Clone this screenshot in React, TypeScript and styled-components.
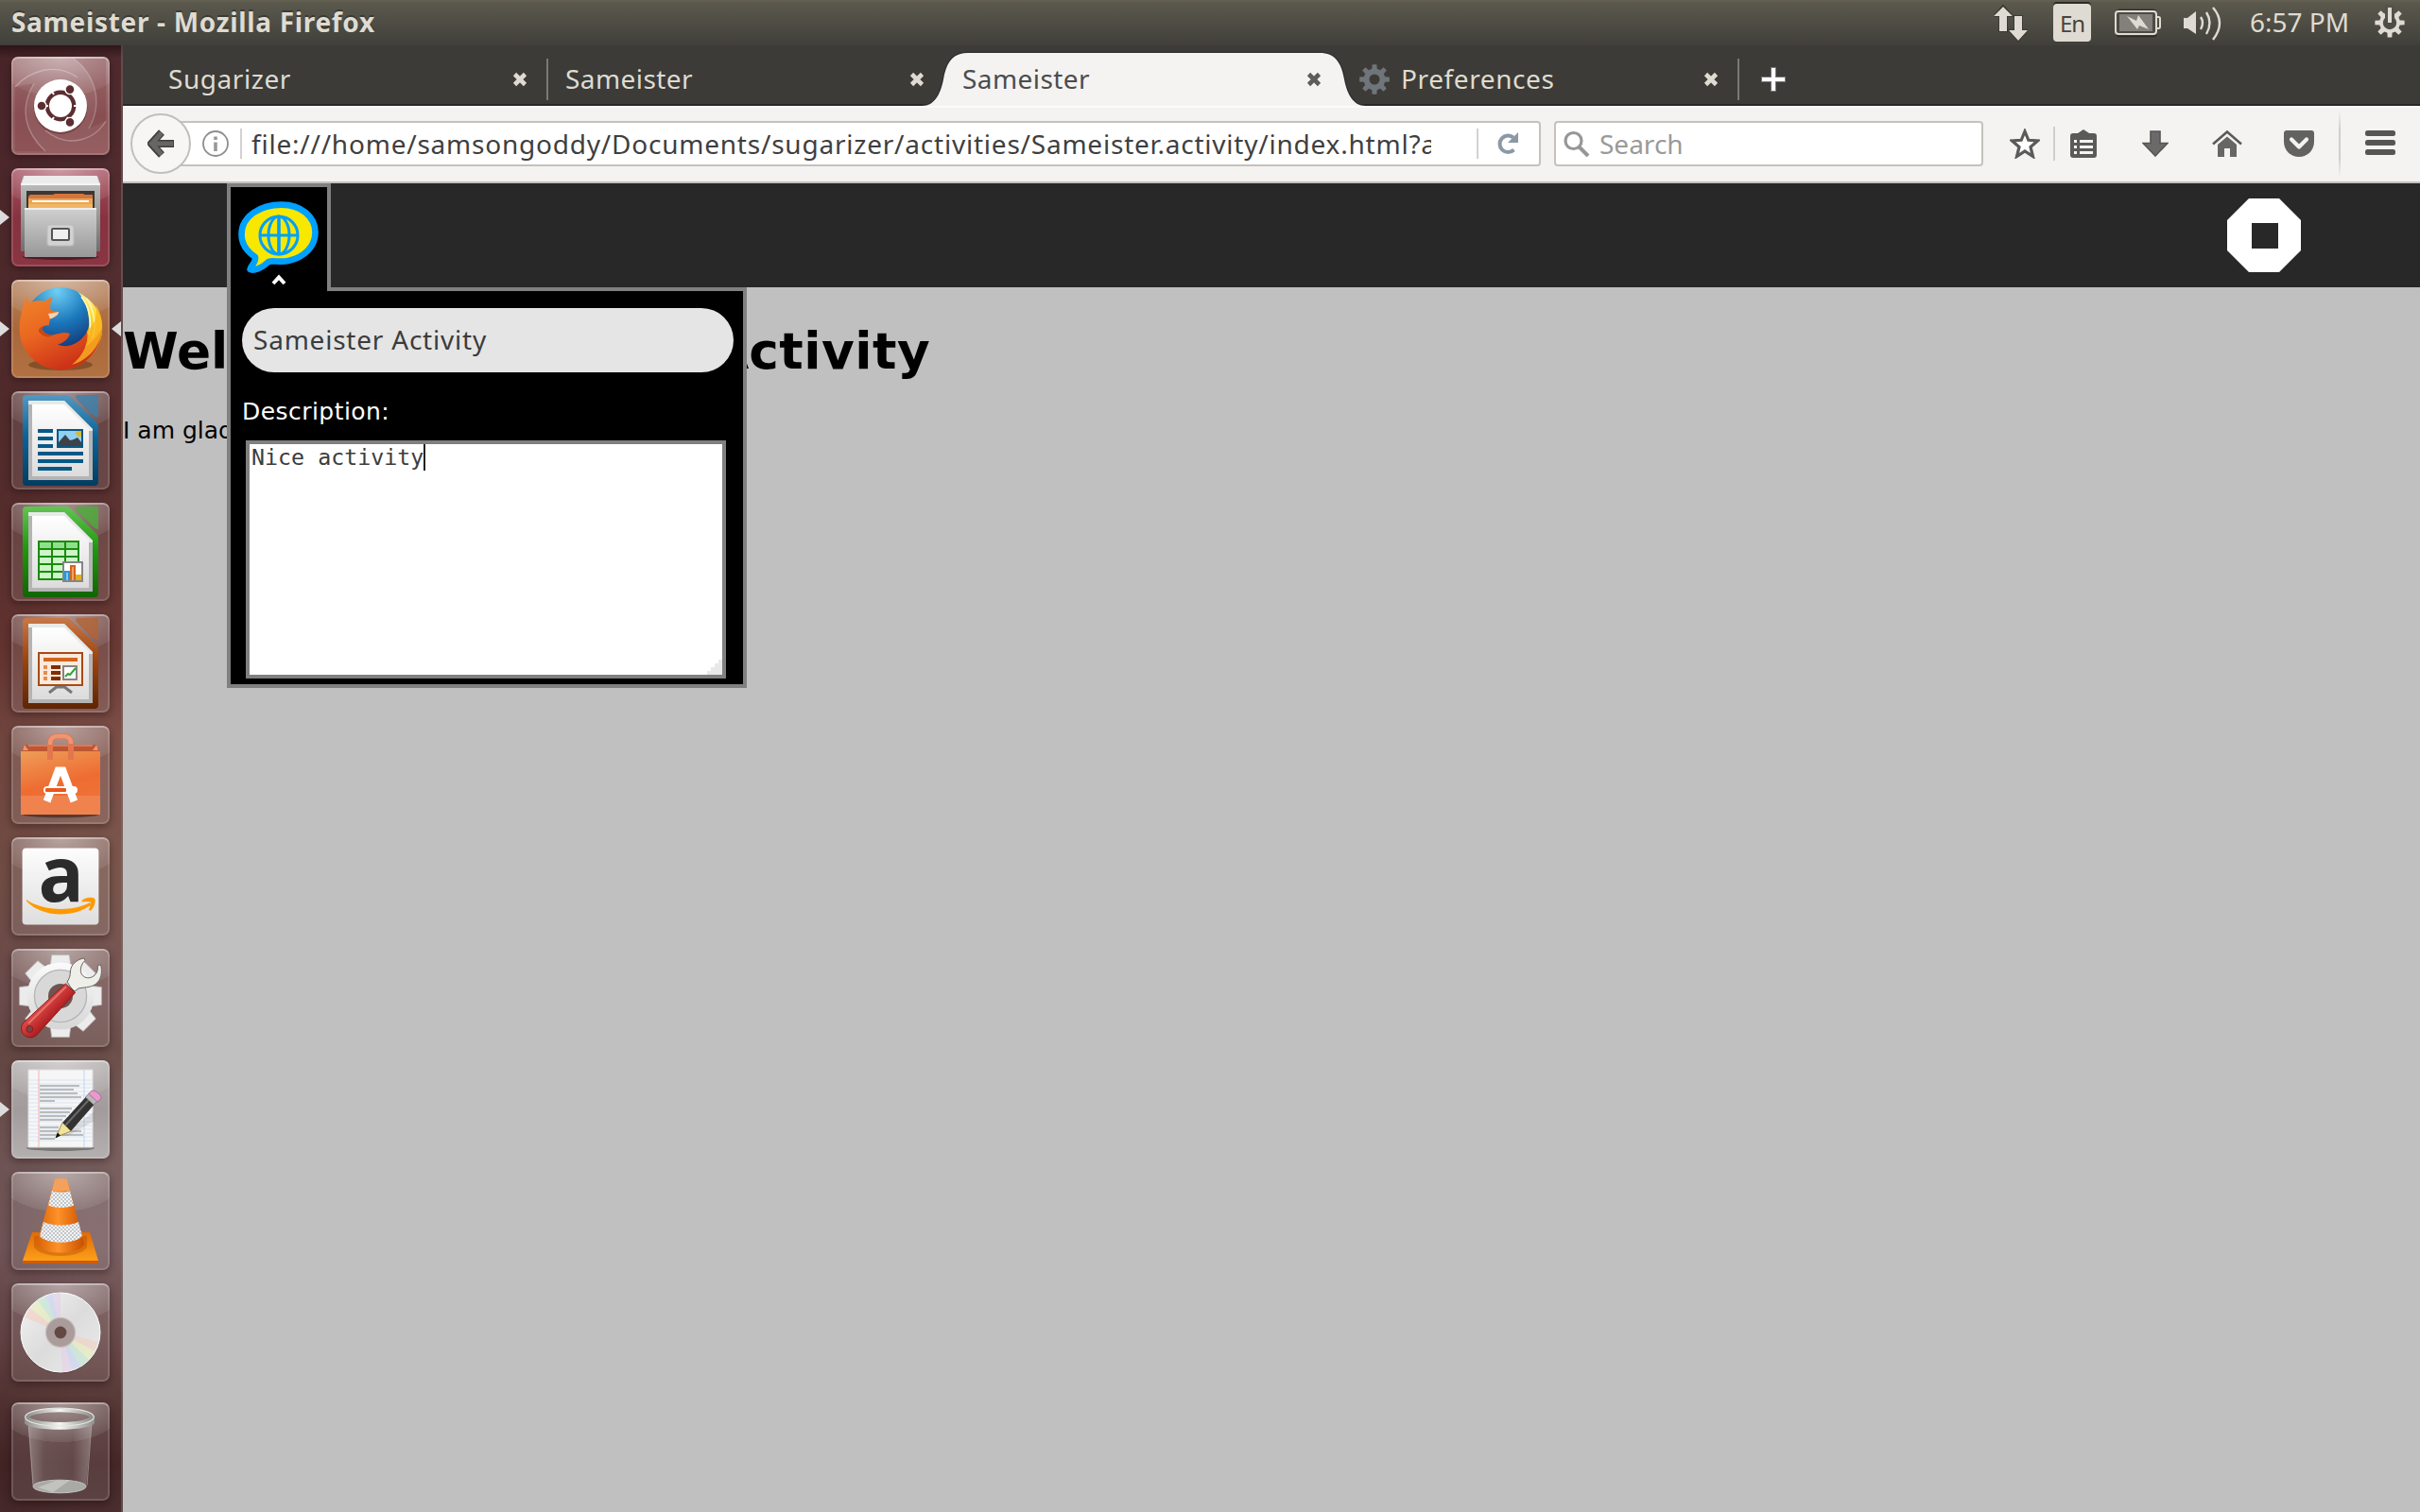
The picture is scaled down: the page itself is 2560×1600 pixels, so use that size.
import React from 'react';
import styled, { createGlobalStyle, css } from 'styled-components';

const UI_FONT = '"Noto Sans", "Open Sans", sans-serif';
const PAGE_FONT = '"DejaVu Sans", sans-serif';

const GlobalStyle = createGlobalStyle`
  html, body { margin: 0; padding: 0; }
  body { width: 2560px; height: 1600px; overflow: hidden; font-family: ${UI_FONT}; }
  * { box-sizing: border-box; }
  svg { display: block; flex: none; }
`;

const Desktop = styled.div`
  display: grid;
  grid-template: 48px 1552px / 130px 2430px;
`;

/* ---------- top panel ---------- */

const Panel = styled.header`
  grid-column: 1 / -1;
  display: flex;
  align-items: center;
  padding: 0 16px 0 12px;
  background: linear-gradient(#656253 0, #5b594d 3px, #403f3a 100%);
  color: #dfdbd2;
`;
const PanelTitle = styled.span`
  flex: 1;
  font-size: 28px;
  font-weight: 700;
  letter-spacing: 0.68px;
  line-height: 46px;
  padding-bottom: 2px;
  text-shadow: 0 -2px 0 rgba(0, 0, 0, 0.3);
`;
const Indicators = styled.div`
  display: flex;
  align-items: center;
  height: 48px;
`;
const Keyboard = styled.span`
  display: flex;
  justify-content: center;
  width: 40px;
  height: 40px;
  margin: 0 25px 0 27px;
  border-radius: 4px;
  background: #dfdbd2;
  box-shadow: 0 -2px 0 #2c2b27;
  color: #45443f;
  font-size: 24px;
  line-height: 42px;
  letter-spacing: -1px;
`;
const Clock = styled.span`
  font-size: 28px;
  line-height: 46px;
  padding-bottom: 2px;
  margin: 0 25px 0 29px;
  white-space: nowrap;
  width: 107px;
`;

/* ---------- launcher ---------- */

const Launcher = styled.nav`
  display: flex;
  flex-direction: column;
  gap: 14px;
  padding: 12px 0 12px 12px;
  border-right: 2px solid rgba(150, 150, 140, 0.35);
  background:
    linear-gradient(rgba(20, 5, 8, 0.55), rgba(20, 5, 8, 0) 14px),
    linear-gradient(90deg, rgba(40, 5, 10, 0.14), rgba(40, 5, 10, 0) 70%),
    linear-gradient(#4e2a2e 0, #522e30 230px, #5a3231 470px, #6b3b36 640px, #7c4f47 730px,
      #7a574d 880px, #755555 1010px, #6c4f4a 1060px, #79605f 1180px, #7a5f62 1270px, #6a4a4a 1370px,
      #583a38 1430px, #472829 1500px, #4a2e2f 1552px);
  background-clip: border-box;
`;
const Tile = styled.div<{ $tint?: string; $last?: boolean }>`
  position: relative;
  width: 104px;
  height: 104px;
  margin-top: ${p => (p.$last ? 'auto' : '0')};
  border-radius: 7px;
  background:
    radial-gradient(ellipse 70px 42px at 50% 0, rgba(255, 255, 255, 0.42), rgba(255, 255, 255, 0.08) 100%, transparent),
    ${p => p.$tint ?? 'rgba(255, 255, 255, 0.1)'};
  box-shadow: inset 0 0 0 2px rgba(255, 255, 255, 0.14), inset 0 2px 0 rgba(255, 255, 255, 0.28), 0 3px 10px rgba(20, 0, 0, 0.4);
`;
const Pip = styled.i<{ $right?: boolean }>`
  position: absolute;
  top: 44px;
  border: 8px solid transparent;
  ${p =>
    p.$right
      ? css`right: -12px; border-left-width: 0; border-right: 10px solid #dcdcdc;`
      : css`left: -12px; border-right-width: 0; border-left: 10px solid #dcdcdc;`}
`;

/* ---------- browser chrome ---------- */

const Browser = styled.main`
  display: flex;
  flex-direction: column;
  min-width: 0;
`;
const TabStrip = styled.div`
  display: flex;
  height: 64px;
  padding: 8px 0 0 30px;
  background: linear-gradient(#3c3b37 62px, #282725 62px);
`;
const TabItem = styled.div<{ $active?: boolean; $divider?: boolean }>`
  position: relative;
  display: flex;
  align-items: center;
  width: 420px;
  padding: 0 22px 0 18px;
  color: ${p => (p.$active ? '#4c4c4c' : '#dfdbd2')};
  ${p => p.$divider && css`
    background: linear-gradient(#7a7974, #7a7974) right 0 top 6px / 2px 44px no-repeat;
  `}
`;
const TabShape = styled.svg`
  position: absolute;
  left: -26px;
  top: -2px;
`;
const TabLabel = styled.span<{ $spacing: number }>`
  position: relative;
  flex: 1;
  font-size: 28px;
  line-height: 40px;
  padding-bottom: 2px;
  letter-spacing: ${p => p.$spacing}px;
`;
const TabIcon = styled.span`
  margin-right: 12px;
`;
const TabClose = styled.svg`
  position: relative;
`;
const NewTab = styled.span`
  display: flex;
  align-items: center;
  padding-left: 22px;
`;

const NavBar = styled.div`
  display: flex;
  align-items: center;
  height: 82px;
  padding: 0 26px 0 8px;
  background: linear-gradient(#fbfbfa, #fbfbfa 2px, #f4f3f1 2px);
  border-bottom: 2px solid #c5c2be;
`;
const BackButton = styled.span`
  position: relative;
  display: flex;
  align-items: center;
  justify-content: center;
  width: 64px;
  height: 64px;
  padding-left: 2px;
  border: 2px solid #c2bfbb;
  border-radius: 50%;
  background: #f7f6f5;
`;
const field = css`
  display: flex;
  align-items: center;
  height: 48px;
  border: 2px solid #c5c1bd;
  background: #fff;
  font-size: 28px;
  line-height: 40px;
`;
const UrlField = styled.div`
  ${field}
  width: 1450px;
  margin-left: -22px;
  padding: 0 21px 0 32px;
  border-radius: 0 4px 4px 0;
`;
const FieldDivider = styled.i<{ $before: number; $after: number }>`
  width: 2px;
  height: 32px;
  margin: 0 ${p => p.$after}px 0 ${p => p.$before}px;
  background: #d4d2cf;
`;
const UrlText = styled.span`
  width: 1248px;
  overflow: hidden;
  white-space: nowrap;
  letter-spacing: 0.78px;
  color: #3f3f3f;
`;
const SearchField = styled.div`
  ${field}
  width: 454px;
  margin-left: 14px;
  padding-left: 8px;
  border-radius: 4px;
  color: #9a9a9a;
`;
const SearchText = styled.span`
  margin-left: 10px;
`;
const NavTools = styled.div`
  display: flex;
  align-items: center;
  padding-left: 28px;
`;
const Tool = styled.span<{ $after?: number }>`
  margin-right: ${p => p.$after ?? 0}px;
`;
const ToolDivider = styled.i<{ $tall?: boolean }>`
  width: 2px;
  height: ${p => (p.$tall ? 72 : 36)}px;
  margin-right: ${p => (p.$tall ? 26 : 16)}px;
  background: ${p => (p.$tall ? 'linear-gradient(transparent, #d0cecb 30%, #d0cecb 70%, transparent)' : '#d0cecb')};
`;
const IndicatorGap = styled.span`
  width: 22px;
`;

/* ---------- activity page ---------- */

const Page = styled.section`
  position: relative;
  flex: 1;
  background: #c0c0c0;
  font-family: ${PAGE_FONT};
  color: #000;
`;
const ActivityBar = styled.div`
  display: flex;
  align-items: flex-start;
  justify-content: space-between;
  height: 110px;
  padding: 0 126px 0 110px;
  background: #282828;
`;
const ActivityButton = styled.div`
  position: relative;
  z-index: 2;
  display: flex;
  flex-direction: column;
  align-items: center;
  width: 110px;
  height: 114px;
  padding-top: 14px;
  border: 4px solid #808080;
  border-bottom: 0;
  background: #000;
`;
const StopButton = styled.span`
  padding-top: 16px;
`;
const Palette = styled.div`
  position: absolute;
  z-index: 1;
  left: 110px;
  top: 110px;
  width: 550px;
  height: 424px;
  padding: 18px 12px 0;
  border: 4px solid #808080;
  background: #000;
`;
const TitleInput = styled.div`
  width: 520px;
  height: 68px;
  padding-left: 12px;
  border-radius: 34px;
  background: #e5e5e5;
  color: #3c3c3c;
  font: 28px/66px ${UI_FONT};
  letter-spacing: 0.78px;
`;
const FieldLabel = styled.div`
  margin: 27px 0 15px;
  color: #fff;
  font-size: 25px;
  line-height: 30px;
  letter-spacing: 0.45px;
`;
const DescriptionBox = styled.div`
  display: flex;
  justify-content: space-between;
  width: 508px;
  height: 252px;
  margin-left: 4px;
  padding: 0 0 0 2px;
  border: 4px solid #808080;
  background: #fff;
  color: #3c3c3c;
  font: 23.3px/28px "DejaVu Sans Mono", monospace;
`;
const DescriptionText = styled.span`
  height: 28px;
  border-right: 2px solid #222;
`;
const Grip = styled.svg`
  align-self: flex-end;
`;
const Content = styled.article`
  padding-top: 36px;
`;
const Heading = styled.h1`
  margin: 0;
  font-size: 53.3px;
  line-height: 64px;
  white-space: nowrap;
`;
const Spaced = styled.span<{ $by: number }>`
  letter-spacing: ${p => p.$by}px;
`;
const Paragraph = styled.p`
  margin: 37px 0 0;
  font-size: 25px;
  line-height: 30px;
`;

/* ---------- launcher icons, drawn on a 52-unit tile ---------- */

const TileSvg = ({ children }: { children: React.ReactNode }) => (
  <svg width="104" height="104" viewBox="0 0 52 52">{children}</svg>
);

const Dash = () => (
  <TileSvg>
    <g fill="none" stroke="#fff" strokeOpacity=".28" strokeWidth=".7">
      <path d="M2 16C10 7 24 3 35 11" />
      <path d="M33 1C44 9 49 24 41 38" />
      <path d="M50 34C44 44 30 49 18 39" />
      <path d="M18 50C7 40 4 27 12 14" />
    </g>
    <path d="M33 1C44 9 49 24 41 38L50 34V1z" fill="#6b2028" opacity=".18" />
    <path d="M18 50C7 40 4 27 12 14L2 16V50z" fill="#6b2028" opacity=".18" />
    <circle cx="26" cy="26.8" r="14.2" fill="#401015" opacity=".35" />
    <circle cx="26" cy="26" r="14" fill="#fff" />
    <circle cx="26" cy="26" r="7.1" fill="none" stroke="#5c2e31" strokeWidth="2.2" />
    <g stroke="#fff" strokeWidth="1"><path d="M30 19L31.5 16.5M33 26H36M29.5 32L31.5 35.5M22.5 20L20 16M22.5 32L20 36M19.5 26H17" /></g>
    <g fill="#5c2e31" stroke="#fff" strokeWidth=".7"><circle cx="16" cy="26" r="2.5" /><circle cx="31" cy="17.3" r="2.5" /><circle cx="31" cy="34.7" r="2.5" /></g>
  </TileSvg>
);

const Files = () => (
  <TileSvg>
    <defs>
      <linearGradient id="cab" x2="0" y2="1"><stop stopColor="#d0d0d0" /><stop offset="1" stopColor="#989898" /></linearGradient>
      <linearGradient id="cabSide" x2="0" y2="1"><stop stopColor="#c4c4c4" /><stop offset="1" stopColor="#6f6f6f" /></linearGradient>
    </defs>
    <ellipse cx="26" cy="47" rx="20" ry="1.5" fill="#300810" opacity=".6" />
    <path d="M5 8L6.5 4H45.500L47 8V44H5z" fill="url(#cabSide)" />
    <path d="M5.500 8L6.800 4H45.200L46.500 8z" fill="#ececec" />
    <path d="M5 8h42v1H5z" fill="#f6f6f6" />
    <path d="M8 12H44V21H8z" fill="#3b3833" />
    <path d="M9 15L10 14H22L23 13.500H38L39 14H43V21H9z" fill="#d5743c" />
    <path d="M9 16H43V21H9z" fill="#eda550" />
    <path d="M11 17H41V18H11z" fill="#fff" />
    <path d="M9 19H43V21H9z" fill="#f1b665" />
    <path d="M7 21H45V47H7z" fill="url(#cab)" />
    <path d="M7 21H45V22H7z" fill="#eee" />
    <rect x="19" y="30" width="14" height="11" rx="1.500" fill="#d2d2d2" stroke="#bdbdbd" strokeWidth=".6" />
    <rect x="21.500" y="32" width="9" height="6" rx=".5" fill="#f0f0f0" stroke="#555" />
  </TileSvg>
);

const Firefox = () => (
  <TileSvg>
    <defs>
      <radialGradient id="globe" cx=".45" cy=".05" r="1"><stop stopColor="#6fd0f4" /><stop offset=".45" stopColor="#1c79bd" /><stop offset=".9" stopColor="#122e6d" /></radialGradient>
      <linearGradient id="fox" x2=".5" y2="1"><stop stopColor="#f0852b" /><stop offset=".5" stopColor="#ea6620" /><stop offset="1" stopColor="#cc3118" /></linearGradient>
      <linearGradient id="tail" x2="0" y2="1"><stop stopColor="#fff3a0" /><stop offset=".35" stopColor="#fcd61b" /><stop offset=".75" stopColor="#f6991e" /><stop offset="1" stopColor="#e04e1b" /></linearGradient>
    </defs>
    <ellipse cx="26" cy="45" rx="17" ry="3" fill="#3a1704" opacity=".35" />
    <circle cx="26" cy="22.500" r="18.500" fill="url(#globe)" />
    <path d="M35 6.500C44 11 49 19 48 28C46.500 39 37 47.500 26 47.500L24 40C34 38 42 31 41 21C40.500 14 38 9 35 6.500z" fill="url(#tail)" />
    <path d="M37 9C41 14 43 22 41 29M40 10C44 17 45 24 43 31" fill="none" stroke="#fff6b8" strokeWidth=".8" />
    <path d="M8.500 8C8.300 10 9 12 9.700 12.400C12 10.800 15 10.600 17.500 11.500C18.500 10.500 20 9.600 22 9.400C20.700 11 20.500 13.500 20.600 15.500C22 16.700 23.500 16.700 25 16.900C25.200 18.500 24 19.500 20.500 20.800C20.200 22.500 20 23.600 19.800 24.200C17.800 24 16.500 24.800 16.200 26.200C18 28.800 20.200 29.600 23 29C26 28.300 28.500 27.300 31 28.600C30 31.500 27.500 33.500 24.500 34.300C29.500 36.500 36.500 34 40 27.500C41.500 30 40.500 33 39 35.500C43 33 46 29.500 48 25.500C47.500 38 38 47.600 26 47.600C14 47.600 4.300 38 4.300 26C4.300 20 6 14 8.500 8z" fill="url(#fox)" />
    <path d="M16.200 26.200C18 28.800 20.200 29.600 23 29C20 31 16.500 30.500 14.500 27.500C14 25.500 17 24 19.800 24.200C17.800 24 16.500 24.800 16.200 26.200z" fill="#b93c17" opacity=".7" />
    <path d="M19.500 18L25 17C25 18.500 23.500 19.500 20.500 20.800z" fill="#f5d3b4" />
    <path d="M40 27C44 24 46 19 44.500 13C48 18 49 25 47 31C44.500 38 39 43 32 45C38 40 41 34 40 27z" fill="#f9b51f" opacity=".8" />
  </TileSvg>
);

const DocBase = ({ id, light, mid, dark }: { id: string; light: string; mid: string; dark: string }) => (
  <>
    <defs>
      <linearGradient id={`${id}f`} x2="0" y2="1"><stop stopColor={light} /><stop offset=".45" stopColor={mid} /><stop offset="1" stopColor={dark} /></linearGradient>
      <linearGradient id={`${id}p`} x2="0" y2="1"><stop stopColor="#fff" /><stop offset="1" stopColor="#dcdcdc" /></linearGradient>
    </defs>
    <path d="M8 2H28.500C30 2 31 2.500 32 3.500L45 16.500C45.700 17.200 46 18 46 19V48A2 2 0 0 1 44 50H8A2 2 0 0 1 6 48V4A2 2 0 0 1 8 2z" fill={`url(#${id}f)`} />
    <path d="M9 5H28L43 20V47H9z" fill="#b4b4b4" />
    <path d="M9 5H28L43 20V21H41V45H11V7H9z" fill="#e9e9e9" />
    <path d="M11 7H28L41 20V45H11z" fill={`url(#${id}p)`} />
    <g opacity=".75">
      <path d="M41.500 2H46V14C44.500 14 43 12.500 42 11.500L35 4.500C34 3.500 34 2 35.500 2z" fill={mid} />
      <path d="M41.500 2H46V14C44.500 14 43 12.500 42 11.500L35 4.500C34 3.500 34 2 35.500 2z" fill={light} opacity=".6" />
    </g>
  </>
);

const Writer = () => (
  <TileSvg>
    <DocBase id="w" light="#5299c2" mid="#0a6499" dark="#043c60" />
    <path d="M14 20h8v2h-8zM14 24h8v2h-8zM14 28h8v2h-8zM14 32h24v2H14zM14 36h24v2H14zM14 40h18v2H14z" fill="#075887" />
    <path d="M24 20h14v10H24z" fill="#075887" />
    <path d="M25 21h12v8H25z" fill="#8fd0f3" />
    <path d="M34 21h3v3h-1.500L34 22.500z" fill="#d6b93b" />
    <path d="M25 29V27L28.500 23L31 26L33 25.500L35 24.500L37 27V29z" fill="#3e4247" />
  </TileSvg>
);

const Calc = () => (
  <TileSvg>
    <DocBase id="c" light="#63c452" mid="#1f9a0f" dark="#126405" />
    <path d="M14 20h22v21H14z" fill="#1b8a0c" />
    <path d="M15 21h6v3h-6zM22 21h6v3h-6zM29 21h6v3h-6z" fill="#8fe08a" />
    <path d="M15 25h6v3h-6zM22 25h6v3h-6zM29 25h6v3h-6zM15 29h6v3h-6zM22 29h6v3h-6zM29 29h6v3h-6zM15 33h6v3h-6zM22 33h6v3h-6zM15 37h6v3h-6zM22 37h6v3h-6z" fill="#ccf5c8" />
    <path d="M27.500 31.500h10v10h-10z" fill="#fff" stroke="#858585" />
    <path d="M28 36h3v5h-3z" fill="#2596e0" /><path d="M31 33h3v8h-3z" fill="#d2651c" /><path d="M34 38h3v3h-3z" fill="#e2b01c" />
    <path d="M29 37h1v4h-1z" fill="#7cc8f5" /><path d="M32 34h1v7h-1z" fill="#f0a26a" />
  </TileSvg>
);

const Impress = () => (
  <TileSvg>
    <DocBase id="i" light="#c87848" mid="#9c4510" dark="#5f2503" />
    <path d="M24.500 38L20 41.500M27.500 38L32 41.500M24 38.500h4" stroke="#777" strokeWidth="1.500" fill="none" />
    <path d="M14.500 20.500h23v17h-23z" fill="#fce9dc" stroke="#a84a13" />
    <path d="M17 23h18v2H17z" fill="#d2651c" />
    <path d="M17 27h2v2h-2zM17 30h2v2h-2zM17 33h2v2h-2z" fill="#e38d52" />
    <path d="M21 27h5v2h-5zM21 30h5v2h-5zM21 33h5v2h-5z" fill="#7d2f04" />
    <path d="M27.500 27.500h7v7h-7z" fill="#fff" stroke="#858585" />
    <path d="M28.500 33L30 31.500L31 32L34 28.500" fill="none" stroke="#2fa32b" />
  </TileSvg>
);

const Software = () => (
  <TileSvg>
    <defs><linearGradient id="bag" x2=".3" y2="1"><stop stopColor="#ee9d59" /><stop offset=".6" stopColor="#ee6c31" /><stop offset="1" stopColor="#ee7338" /></linearGradient></defs>
    <ellipse cx="26" cy="47" rx="20" ry="1.600" fill="#2a0f08" opacity=".5" />
    <path d="M5 14L7 10H45L47 14z" fill="#bd5632" />
    <path d="M7 10L9 13H6zM45 10L43 13H46z" fill="#f1946b" />
    <path d="M9 10.500H43" stroke="#dd7a52" strokeWidth="1" />
    <path d="M5 13.500H47V47H5z" fill="url(#bag)" />
    <path d="M5 37H47V47H5z" fill="#f0824d" />
    <path d="M20.500 18V9.500C20.500 6.500 22 5.500 25 5.500H27C30 5.500 31.500 6.500 31.500 9.500V18" fill="none" stroke="#e2774e" strokeWidth="3" />
    <path d="M20.500 10V9.500C20.500 6.500 22 5.500 25 5.500H27C30 5.500 31.500 6.500 31.500 9.500" fill="none" stroke="#ee9673" strokeWidth="2.200" />
    <path d="M18.800 40L24.800 23.800H27.200L33.200 40" fill="none" stroke="#fff" strokeWidth="4" />
    <rect x="17" y="32" width="18" height="4" rx="2" fill="#fff" />
    <rect x="18" y="33" width="11" height="2" rx=".6" fill="#e9571b" />
  </TileSvg>
);

const StoreGlyph = styled.text`
  font: 700 40px "Open Sans", "Noto Sans", sans-serif;
  fill: #2b2b2b;
`;
const Amazon = () => (
  <TileSvg>
    <defs><linearGradient id="az" x2="0" y2="1"><stop stopColor="#fdfdfd" /><stop offset="1" stopColor="#dedede" /></linearGradient></defs>
    <rect x="5.800" y="5.800" width="40.400" height="40.400" rx="2" fill="url(#az)" />
    <StoreGlyph x="14.200" y="34">a</StoreGlyph>
    <path d="M8 33C15 38.500 32 40 41.500 34.500L42.200 35.800C33 43 16 42.500 8 33.800z" fill="#ff9900" />
    <path d="M37.500 33.500C40 31.700 43 31.800 44 32.700C44.400 34.500 43.600 37 41.700 38.800L41.200 38.300C42 36.500 42.600 34.700 42 34.100C41 33.600 39 33.800 37.500 34z" fill="#ff9900" stroke="#ff9900" strokeWidth=".5" />
  </TileSvg>
);

const Settings = () => (
  <TileSvg>
    <defs>
      <linearGradient id="gear" x2="0" y2="1"><stop stopColor="#fbfbfb" /><stop offset="1" stopColor="#d6d6d6" /></linearGradient>
      <linearGradient id="hnd" x1="0" y1="0" x2="1" y2="1"><stop offset=".3" stopColor="#ee5a54" /><stop offset=".6" stopColor="#b01f22" /></linearGradient>
    </defs>
    <g fill="#ececec" stroke="#bdb5b5" strokeWidth=".4">
      {[0, 45, 90, 135].map(a => (
        <path key={a} d="M20.500 10L21.300 3.300H30.700L31.500 10V40L30.700 46.700H21.300L20.500 40z" transform={`rotate(${a} 26 25)`} />
      ))}
    </g>
    <circle cx="26" cy="25" r="17.800" fill="url(#gear)" />
    <circle cx="26" cy="25" r="13.800" fill="#d8d8d8" stroke="#b6b6b6" strokeWidth=".7" />
    <circle cx="26" cy="25" r="6.500" fill="#6f5450" />
    <path d="M31.500 20.500L29.500 17.500C31 15.500 31.200 13.500 31.200 12C31.400 8.500 34.500 5.500 38.500 5L39 6.200C36.500 8.500 36.200 11.500 37.200 13.500C39 16 41.500 15.700 43.500 14.500C45.300 13 46 11 45.700 8.700L47.300 8.500C48.300 12.500 47.500 16.500 44.500 18.800C41.500 20.700 38 20.300 35.500 21L33.500 22.500z" fill="#efefea" stroke="#6a6662" strokeWidth=".5" />
    <path d="M28.700 18.500L33.800 23.200L13.500 45.500C11.500 47.500 8.500 47.300 6.600 45.500C4.800 43.500 4.900 40.500 6.800 38.800z" fill="url(#hnd)" stroke="#8e1a1c" strokeWidth=".5" />
    <path d="M29 20L9 39.500" stroke="#f08a80" strokeWidth="1" opacity=".7" />
    <circle cx="9.700" cy="42.500" r="1.700" fill="#7a4444" stroke="#8e1a1c" strokeWidth=".5" />
  </TileSvg>
);

const Editor = () => (
  <TileSvg>
    <ellipse cx="26" cy="46.500" rx="18" ry="1.500" fill="#222" opacity=".4" />
    <path d="M9 5H43V46H9z" fill="#f6f6f6" stroke="#ddd" strokeWidth=".5" />
    {Array.from({ length: 17 }, (_, i) => <path key={i} d={`M9 ${10.500 + i * 2}H43`} stroke="#d4e2f5" strokeWidth=".4" />)}
    <path d="M14.500 5V46" stroke="#f0b5b5" strokeWidth=".5" /><path d="M38.500 5V46" stroke="#c0d5f5" strokeWidth=".5" />
    <path d="M15 13.500H36M15 15.500H33M15 17.500H35M15 19.500H37M15 21.500H23M15 25.500H32M15 27.500H31M15 29.500H29M15 31.500H27M15 35.500H25M15 37.500H37M15 39.500H38M15 41.500H23" stroke="#a8a8a8" strokeWidth=".7" />
    <path d="M26 40L44 27V32L30 40z" fill="#777" opacity=".2" />
    <path d="M27 33L40.500 18.200L44.800 22.200L31.500 37.500z" fill="#333" />
    <path d="M28.500 34.500L42 19.800" stroke="#6a6a6a" strokeWidth="1" />
    <path d="M27 33L31.500 37.500L24.500 40.300L23.500 41L24.300 39z" fill="#f2e39a" stroke="#8f8030" strokeWidth=".4" />
    <path d="M24.400 38.200L26 39.800L23.300 41.200z" fill="#111" />
    <path d="M39.200 19.500L41 17.500L45.500 21.500L43.600 23.600z" fill="#b9b9b9" stroke="#777" strokeWidth=".3" />
    <path d="M40.800 17.700L42.500 16.100C44.500 15.500 48 18.500 47.500 20.300L45.500 22z" fill="#e79acb" stroke="#a3628e" strokeWidth=".4" />
  </TileSvg>
);

const Vlc = () => (
  <TileSvg>
    <defs>
      <linearGradient id="cone"><stop stopColor="#d86208" /><stop offset=".45" stopColor="#ff9228" /><stop offset="1" stopColor="#c94f00" /></linearGradient>
      <linearGradient id="base" x2="0" y2="1"><stop stopColor="#e26a05" /><stop offset="1" stopColor="#ffa51c" /></linearGradient>
      <pattern id="chk" width="2" height="2" patternUnits="userSpaceOnUse"><path d="M0 0h2v2H0z" fill="#f4f4f4" /><path d="M0 0h1v1H0zM1 1h1v1H1z" fill="#c2c6ca" /></pattern>
    </defs>
    <path d="M11 32H41.500L46 47V48.500H6V47z" fill="url(#base)" />
    <path d="M6 47H46V48.500H6z" fill="#cf5c00" />
    <path d="M12 40V34H40V40C36 46 16 46 12 40z" fill="#a84200" opacity=".35" />
    <path d="M23 4C24.500 3.300 28 3.300 29.500 4L38.500 38C37 44.500 15 44.500 13.500 38z" fill="url(#cone)" />
    <path d="M23 4C24.500 3.300 28 3.300 29.500 4L31 10H21.500z" fill="#f4a15d" />
    <path d="M21.500 10C24 11 28.500 11 31 10L33 17.800C30 19.400 22.500 19.400 19.500 17.800z" fill="url(#chk)" />
    <path d="M17 26.500C21 28.800 31.500 28.800 35.500 26.500L37.500 34C34 38.500 18.500 38.500 15 34z" fill="url(#chk)" />
  </TileSvg>
);

const Disc = () => (
  <TileSvg>
    <defs><linearGradient id="cd" x2="1" y2="1"><stop stopColor="#f4f4f4" /><stop offset=".5" stopColor="#dcdcdc" /><stop offset="1" stopColor="#ececec" /></linearGradient></defs>
    <circle cx="26" cy="26.500" r="21.200" fill="#222" opacity=".25" />
    <circle cx="26" cy="26" r="21" fill="url(#cd)" stroke="#fff" strokeWidth=".5" />
    <g opacity=".6">
      <path d="M26 26L7 18L10 13z" fill="#f5cfc0" /><path d="M26 26L10 13L14 9z" fill="#e8efb8" /><path d="M26 26L14 9L18 7z" fill="#bfe8d2" /><path d="M26 26L18 7L22 5.500z" fill="#c9d3f3" /><path d="M26 26L22 5.500L26 5z" fill="#e6d0ea" />
      <path d="M26 26L46 31L44 36z" fill="#f5cfc0" /><path d="M26 26L44 36L41 40.500z" fill="#e8efb8" /><path d="M26 26L41 40.500L37 44z" fill="#bfe8d2" /><path d="M26 26L37 44L32 46z" fill="#c9d3f3" /><path d="M26 26L32 46L27 47z" fill="#e6d0ea" />
    </g>
    <circle cx="26" cy="26" r="7.800" fill="#ab9c9c" stroke="#c9c0c0" strokeWidth=".6" />
    <circle cx="26" cy="26" r="3.200" fill="#634844" />
  </TileSvg>
);

const Trash = () => (
  <TileSvg>
    <defs>
      <linearGradient id="can"><stop stopColor="#fff" stopOpacity=".32" /><stop offset=".25" stopColor="#fff" stopOpacity=".1" /><stop offset=".7" stopColor="#fff" stopOpacity=".06" /><stop offset="1" stopColor="#fff" stopOpacity=".28" /></linearGradient>
      <linearGradient id="rim"><stop stopColor="#8e8e8a" /><stop offset=".5" stopColor="#f6f6f4" /><stop offset="1" stopColor="#8e8e8a" /></linearGradient>
    </defs>
    <path d="M9 10L11.500 44.500C16 49 35 49 39.500 44.500L42.500 10z" fill="url(#can)" />
    <path d="M9 11L11.500 44M42.500 11L40 44" stroke="#d8cccc" strokeWidth=".4" opacity=".6" />
    <ellipse cx="25.500" cy="44.500" rx="14" ry="3.400" fill="#a9a9a5" stroke="#c6c6c2" strokeWidth=".5" />
    <path d="M14 45L24 41.200H31L22 47.500z" fill="#d4d4d0" opacity=".6" />
    <ellipse cx="25.500" cy="7.800" rx="17" ry="3.700" fill="none" stroke="url(#rim)" strokeWidth="2" />
    <path d="M7 8.200C9 13.500 42 13.500 44 8.200V11C42 15.500 9 15.500 7 11z" fill="url(#rim)" />
    <ellipse cx="25.500" cy="7.800" rx="18.200" ry="4.700" fill="none" stroke="#e6e6e4" strokeWidth=".6" />
  </TileSvg>
);

/* ---------- chrome and page icons ---------- */

const CloseMark = ({ color }: { color: string }) => (
  <TabClose width="16" height="16" viewBox="0 0 16 16">
    <path d="M2.500 2.500L13.500 13.500M13.500 2.500L2.500 13.500" stroke={color} strokeWidth="4.600" />
  </TabClose>
);

const gearPath = (cx: number, cy: number, r1: number, r2: number, n: number) => {
  const pts: string[] = [];
  for (let i = 0; i < n; i++) {
    const a = (i / n) * Math.PI * 2 - Math.PI / 2;
    const w = Math.PI / n;
    [[-0.6, r1], [-0.38, r2], [0.38, r2], [0.6, r1]].forEach(([k, r]) =>
      pts.push(`${(cx + Math.cos(a + k * w) * r).toFixed(2)} ${(cy + Math.sin(a + k * w) * r).toFixed(2)}`));
  }
  return `M${pts.join('L')}z`;
};

const ink = '#5a5a5a';
const panelInk = '#dfdbd2';

const launcherItems: { icon: React.ReactNode; tint?: string; left?: boolean; right?: boolean; last?: boolean }[] = [
  { icon: <Dash />, tint: 'linear-gradient(#a57a7c, #8f585b 60%, #965f62)' },
  { icon: <Files />, tint: 'linear-gradient(#a85463, #86323f 50%, #8a3542)', left: true },
  { icon: <Firefox />, tint: 'linear-gradient(#b5835f, #a9683b 50%, #b27142)', left: true, right: true },
  { icon: <Writer /> }, { icon: <Calc /> }, { icon: <Impress /> }, { icon: <Software /> }, { icon: <Amazon /> },
  { icon: <Settings /> }, { icon: <Editor />, tint: 'linear-gradient(#b3adad, #a29b9b 50%, #b5b0b0)', left: true },
  { icon: <Vlc /> }, { icon: <Disc /> }, { icon: <Trash />, last: true },
];

export default function App() {
  return (
    <>
      <GlobalStyle />
      <Desktop>
        <Panel>
          <PanelTitle>Sameister - Mozilla Firefox</PanelTitle>
          <Indicators>
            <svg width="36" height="48" viewBox="0 0 36 48">
              <g stroke="#2f2e2a" strokeWidth="2" strokeOpacity=".6"><path d="M10 6L20 17H14V33H6V17H0z" /><path d="M22 17H30V32H36L26 43L16 32H22z" /></g>
              <path d="M10 7L20 17H14V33H6V17H0zM22 17H30V32H36L26 43L16 32H22z" fill={panelInk} />
            </svg>
            <Keyboard>En</Keyboard>
            <svg width="50" height="48" viewBox="0 0 50 48">
              <rect x="2" y="10.500" width="42" height="28" rx="3" fill="none" stroke="#2c2b27" strokeWidth="1.500" />
              <rect x="1" y="12" width="43" height="24" rx="3" fill="#4b4a44" stroke={panelInk} strokeWidth="2" />
              <rect x="5" y="15" width="35" height="18" fill="#82807a" />
              <path d="M44.500 18H46.500Q48 18 48 20V28Q48 30 46.500 30H44.500" fill="none" stroke={panelInk} strokeWidth="2" />
              <path d="M13 17L23 22L25 16L36 31L26 27L24 31z" fill={panelInk} />
            </svg>
            <IndicatorGap />
            <svg width="42" height="48" viewBox="0 0 42 48">
              <path d="M1 19H5L14 12V36L5 30H1z" fill={panelInk} />
              <g fill="none" stroke={panelInk} strokeWidth="2.400"><path d="M19 18Q23 24 19 31" /><path d="M25 13Q32 24 25 36" /><path d="M32 8Q46 24 32 42" /></g>
            </svg>
            <Clock>6:57 PM</Clock>
            <svg width="32" height="48" viewBox="0 0 32 48">
              <path d={gearPath(16, 24, 11, 15.800, 8)} fill={panelInk} />
              <circle cx="16" cy="24" r="7.200" fill="#4d4c45" />
              <path d="M11 5H21V20H11z" fill="#54524a" />
              <path d="M14 8H18V24H14z" fill={panelInk} />
            </svg>
          </Indicators>
        </Panel>

        <Launcher>
          {launcherItems.map((item, i) => (
            <Tile key={i} $tint={item.tint} $last={item.last}>
              {item.icon}
              {item.left && <Pip />}
              {item.right && <Pip $right />}
            </Tile>
          ))}
        </Launcher>

        <Browser>
          <TabStrip>
            <TabItem $divider><TabLabel $spacing={0.55}>Sugarizer</TabLabel><CloseMark color="#dfdbd2" /></TabItem>
            <TabItem><TabLabel $spacing={0.42}>Sameister</TabLabel><CloseMark color="#dfdbd2" /></TabItem>
            <TabItem $active>
              <TabShape width="472" height="58" viewBox="-2 -2 472 58">
                <path d="M0 56C12 56 19 44 22 28C25 10 32 0 48 0H420C436 0 443 10 446 28C449 44 456 56 468 56" fill="#f4f3f1" stroke="#2d2e30" strokeWidth="2.500" />
                <path d="M0 56C12 56 19 44 22 28C25 10 32 0 48 0H420C436 0 443 10 446 28C449 44 456 56 468 56z" fill="#f4f3f1" />
              </TabShape>
              <TabLabel $spacing={0.42}>Sameister</TabLabel>
              <CloseMark color="#5c5c5a" />
            </TabItem>
            <TabItem $divider>
              <TabIcon>
                <svg width="32" height="32" viewBox="0 0 32 32">
                  <path d={`${gearPath(16, 16, 11.500, 16, 8)}M16 10.500A5.500 5.500 0 1 0 16 21.500A5.500 5.500 0 1 0 16 10.500z`} fillRule="evenodd" fill="#70757b" />
                </svg>
              </TabIcon>
              <TabLabel $spacing={0.6}>Preferences</TabLabel>
              <CloseMark color="#dfdbd2" />
            </TabItem>
            <NewTab>
              <svg width="28" height="28" viewBox="0 0 28 28"><path d="M14 1V27M1 14H27" stroke="#777" strokeWidth="6" /><path d="M14 2V26M2 14H26" stroke="#fff" strokeWidth="4" /></svg>
            </NewTab>
          </TabStrip>

          <NavBar>
            <BackButton>
              <svg width="30" height="32" viewBox="0 0 30 32"><path d="M15 4L4 16L15 28M5 16H28" fill="none" stroke="#3f3f3f" strokeWidth="8" strokeLinejoin="round" /><path d="M15 4.500L4.500 16L15 27.500M6 16H27" fill="none" stroke="#666" strokeWidth="5" /></svg>
            </BackButton>
            <UrlField>
              <svg width="28" height="28" viewBox="0 0 28 28"><circle cx="14" cy="14" r="13" fill="none" stroke="#8e8e8e" strokeWidth="1.800" /><path d="M14 6.500V10M14 12.500V22" stroke="#999" strokeWidth="3.600" /></svg>
              <FieldDivider $before={12} $after={10} />
              <UrlText>file:///home/samsongoddy/Documents/sugarizer/activities/Sameister.activity/index.html?a</UrlText>
              <FieldDivider $before={48} $after={19} />
              <svg width="24" height="26" viewBox="0 0 24 26"><path d="M18.500 19.500A8.800 8.800 0 1 1 18 6.500" fill="none" stroke="#8b99a6" strokeWidth="4" /><path d="M23 1V12H12z" fill="#8b99a6" /></svg>
            </UrlField>
            <SearchField>
              <svg width="28" height="28" viewBox="0 0 28 28"><circle cx="10.500" cy="11" r="8.500" fill="none" stroke="#979797" strokeWidth="3.200" /><path d="M16.500 17.500L26 27" stroke="#979797" strokeWidth="4" /></svg>
              <SearchText>Search</SearchText>
            </SearchField>
            <NavTools>
              <Tool $after={14}><svg width="32" height="32" viewBox="0 0 32 32"><path d="M16 3L19.800 12.300L29.500 13L22 19.500L24.500 29.500L16 24L7.500 29.500L10 19.500L2.500 13L12.200 12.300z" fill="#fff" stroke={ink} strokeWidth="3.200" /></svg></Tool>
              <ToolDivider />
              <Tool $after={48}><svg width="28" height="32" viewBox="0 0 28 32"><path d="M3 5H8L14 1L20 5H25Q28 5 28 8V28Q28 31 25 31H3Q0 31 0 28V8Q0 5 3 5z" fill={ink} /><path d="M4 12h3v3H4zM4 18h3v3H4zM4 24h3v3H4zM10 12h14v3H10zM10 18h14v3H10zM10 24h14v3H10z" fill="#f4f3f1" /></svg></Tool>
              <Tool $after={46}><svg width="28" height="28" viewBox="0 0 28 28"><path d="M9 1H19V13.500H27L14 27L1 13.500H9z" fill="#6a6a6a" stroke="#555" strokeWidth="1.600" /></svg></Tool>
              <Tool $after={44}><svg width="32" height="28" viewBox="0 0 32 28"><path d="M1 14.500L16 1.500L31 14.500" fill="none" stroke={ink} strokeWidth="2.600" /><path d="M6 15L16 6.500L26 15V28H19V19H13V28H6z" fill="#666" /></svg></Tool>
              <Tool $after={26}><svg width="32" height="28" viewBox="0 0 32 28"><path d="M3 0H29Q32 0 32 3V12C32 21 25 28 16 28S0 21 0 12V3Q0 0 3 0z" fill="#626262" /><path d="M8 9.500L16 17.500L24 9.500" fill="none" stroke="#f4f3f1" strokeWidth="4.200" strokeLinecap="round" strokeLinejoin="round" /></svg></Tool>
              <ToolDivider $tall />
              <Tool><svg width="32" height="28" viewBox="0 0 32 28"><g fill="#555"><rect y="0" width="32" height="6" rx="2.500" /><rect y="10" width="32" height="6" rx="2.500" /><rect y="20" width="32" height="6" rx="2.500" /></g></svg></Tool>
            </NavTools>
          </NavBar>

          <Page>
            <ActivityBar>
              <ActivityButton>
                <svg width="88" height="78" viewBox="0 0 88 78">
                  <path d="M47 4.600C24 4.600 4.500 17 4.500 36C4.500 46 10 54 19 60C20 66 13.500 70 13.500 73C17 75 26 72 33 65C38 63 45 66 54 64C72 60 82.500 48 82.500 34C82.500 17 67 4.600 47 4.600z" fill="#f8e800" stroke="#00a0ff" strokeWidth="6.600" strokeLinejoin="round" />
                  <g fill="none" stroke="#00a0ff" strokeWidth="3"><circle cx="44" cy="37" r="20" /><ellipse cx="44" cy="37" rx="11" ry="20" /><path d="M24 37H64" /><path d="M44 17V57" strokeWidth="3.600" /></g>
                </svg>
                <svg width="16" height="12" viewBox="0 0 16 12"><path d="M2 10L8 3.500L14 10" fill="none" stroke="#fff" strokeWidth="4" /></svg>
              </ActivityButton>
              <StopButton>
                <svg width="78" height="78" viewBox="0 0 78 78"><path d="M23 0H55L78 23V55L55 78H23L0 55V23z" fill="#fff" /><path d="M26 26H54V53H26z" fill="#282828" /></svg>
              </StopButton>
            </ActivityBar>
            <Content>
              <Heading>Wel<Spaced $by={-4}>come to Sameister </Spaced>A<Spaced $by={0.5}>ctivity</Spaced></Heading>
              <Paragraph>I am glad</Paragraph>
            </Content>
            <Palette>
              <TitleInput>Sameister Activity</TitleInput>
              <FieldLabel>Description:</FieldLabel>
              <DescriptionBox>
                <DescriptionText>Nice activity</DescriptionText>
                <Grip width="16" height="16" viewBox="0 0 16 16"><path d="M0 16V12H4V8H8V4H12V0H16V16z" fill="#e9e9e9" /></Grip>
              </DescriptionBox>
            </Palette>
          </Page>
        </Browser>
      </Desktop>
    </>
  );
}
